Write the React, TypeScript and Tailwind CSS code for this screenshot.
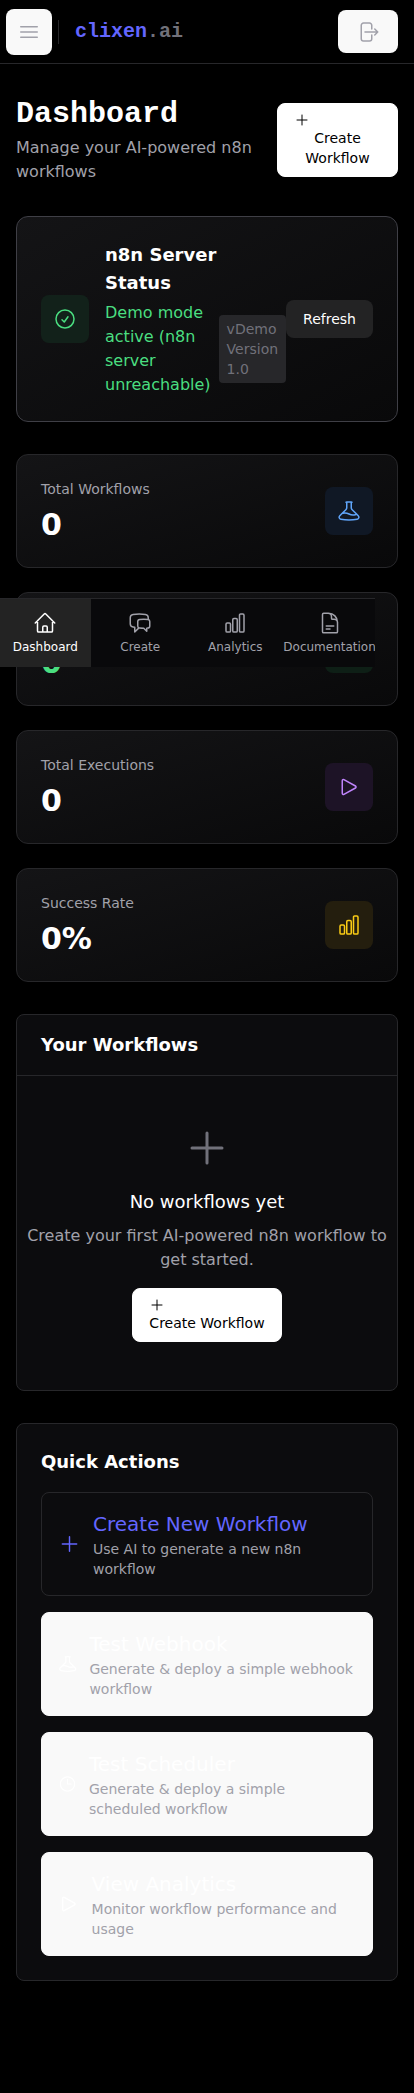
import type { ReactNode } from 'react';
import type { IconType } from 'react-icons';
import {
  HiOutlineArrowRightOnRectangle,
  HiOutlineBars3,
  HiOutlineBeaker,
  HiOutlineChartBar,
  HiOutlineChatBubbleLeftRight,
  HiOutlineCheckCircle,
  HiOutlineClock,
  HiOutlineDocumentText,
  HiOutlineHome,
  HiOutlinePlay,
  HiOutlinePlus,
} from 'react-icons/hi2';

function CreateButton({ className = '' }: { className?: string }) {
  return (
    <button
      className={`shrink-0 rounded-lg border border-white bg-white px-4 py-2 text-center text-sm leading-5 text-black ${className}`}
    >
      <HiOutlinePlus className="h-4 w-4" />
      Create Workflow
    </button>
  );
}

function StatCard({
  label,
  value,
  valueClass,
  iconClass,
  Icon,
}: {
  label: string;
  value: string;
  valueClass: string;
  iconClass: string;
  Icon: IconType;
}) {
  return (
    <div className="flex items-center justify-between rounded-xl border border-[#27272a] bg-linear-to-br from-[#141416] to-[#09090a] p-6">
      <div>
        <p className="text-sm leading-5 text-[#a1a1aa]">{label}</p>
        <p className={`mt-2 text-3xl leading-9 font-bold ${valueClass}`}>{value}</p>
      </div>
      <div className={`flex h-12 w-12 items-center justify-center rounded-lg ${iconClass}`}>
        <Icon className="h-6 w-6" />
      </div>
    </div>
  );
}

function Action({
  Icon,
  iconClass,
  title,
  className,
  children,
}: {
  Icon: IconType;
  iconClass: string;
  title: string;
  className: string;
  children: ReactNode;
}) {
  return (
    <button className={`flex w-full items-center rounded-lg border p-4 text-left ${className}`}>
      <Icon className={`mr-3 h-6 shrink-0 ${iconClass}`} />
      <div>
        <div className="text-xl leading-[30px]">{title}</div>
        <div className="text-sm leading-5 text-[#a1a1aa]">{children}</div>
      </div>
    </button>
  );
}

function NavItem({ Icon, label, className }: { Icon: IconType; label: string; className: string }) {
  return (
    <a className={`flex shrink-0 flex-col items-center py-3 ${className}`}>
      <Icon className="h-6 w-6" />
      <span className="mt-1 text-xs leading-4">{label}</span>
    </a>
  );
}

export default function App() {
  return (
    <div className="relative min-h-[2093px] w-[414px] bg-black font-['DejaVu_Sans',sans-serif] text-base leading-6 text-white">
      <header className="flex h-16 items-center border-b border-[#27272a] pr-4 pl-1.5">
        <button className="flex h-[46px] w-[46px] items-center justify-center rounded-lg bg-[#f9f9f9] text-[#a1a1aa]">
          <HiOutlineBars3 className="h-6 w-6" />
        </button>
        <div className="ml-1.5 h-6 w-px bg-[#27272a]" />
        <div className="ml-4 font-['Liberation_Mono',monospace] text-xl leading-7 font-bold text-[#6366ff]">
          clixen<span className="text-[#71717a]">.ai</span>
        </div>
        <button className="ml-auto flex h-[43px] w-[60px] items-center justify-center rounded-lg bg-[#f9f9f9] text-[#a1a1aa]">
          <HiOutlineArrowRightOnRectangle className="h-6 w-6" />
        </button>
      </header>

      <main className="flex flex-col gap-8 px-4 pt-8">
        <div className="flex items-center justify-between">
          <div>
            <h1 className="font-['Liberation_Mono',monospace] text-3xl leading-9 font-bold">Dashboard</h1>
            <p className="mt-1 text-[#a1a1aa]">Manage your AI-powered n8n workflows</p>
          </div>
          <CreateButton className="w-[121px]" />
        </div>

        <section className="flex items-center rounded-xl border border-[#3f3f46] bg-linear-to-br from-[#141416] to-[#09090a] p-6">
          <div className="flex h-12 w-12 shrink-0 items-center justify-center rounded-lg bg-[#12211a] text-[#4ade80]">
            <HiOutlineCheckCircle className="h-6 w-6" />
          </div>
          <div className="ml-4 w-[181px] shrink-0">
            <h3 className="w-[120px] text-lg leading-7 font-bold">n8n Server Status</h3>
            <div className="mt-1 flex items-center">
              <p className="w-[105.6px] shrink-0 text-[#4ade80]">Demo mode active (n8n server unreachable)</p>
              <span className="ml-2 w-[67.4px] shrink-0 rounded bg-[#27272a] px-2 py-1 text-sm leading-5 text-[#71717a]">
                vDemo Version 1.0
              </span>
            </div>
          </div>
          <button className="h-[38px] w-[87px] shrink-0 rounded-lg bg-[#232324] text-sm leading-5 text-white">
            Refresh
          </button>
        </section>

        <section className="flex flex-col gap-6">
          <StatCard
            label="Total Workflows"
            value="0"
            valueClass="text-white"
            iconClass="bg-[#101825] text-[#60a5fa]"
            Icon={HiOutlineBeaker}
          />
          <StatCard
            label="Active Workflows"
            value="0"
            valueClass="text-[#4ade80]"
            iconClass="bg-[#0e1f16] text-[#4ade80]"
            Icon={HiOutlineCheckCircle}
          />
          <StatCard
            label="Total Executions"
            value="0"
            valueClass="text-white"
            iconClass="bg-[#1d1326] text-[#c084fc]"
            Icon={HiOutlinePlay}
          />
          <StatCard
            label="Success Rate"
            value="0%"
            valueClass="text-white"
            iconClass="bg-[#241e0e] text-[#facc15]"
            Icon={HiOutlineChartBar}
          />
        </section>

        <section className="rounded-lg border border-[#27272a] bg-[#0c0c0e]">
          <div className="border-b border-[#27272a] px-6 py-4">
            <h2 className="text-lg leading-7 font-bold">Your Workflows</h2>
          </div>
          <div className="flex flex-col items-center py-12 text-center">
            <HiOutlinePlus className="h-12 w-12 text-[#71717a]" />
            <h3 className="mt-4 text-lg leading-7">No workflows yet</h3>
            <p className="mt-2 mb-4 text-[#a1a1aa]">Create your first AI-powered n8n workflow to get started.</p>
            <CreateButton />
          </div>
        </section>

        <section className="rounded-lg border border-[#27272a] bg-[#0c0c0e] p-6">
          <h2 className="text-lg leading-7 font-bold">Quick Actions</h2>
          <div className="mt-4 flex flex-col gap-4">
            <Action
              Icon={HiOutlinePlus}
              iconClass="w-[23px]"
              title="Create New Workflow"
              className="border-[#27272a] text-[#6366ff]"
            >
              Use AI to generate a new n8n workflow
            </Action>
            <Action
              Icon={HiOutlineBeaker}
              iconClass="w-[19.4px]"
              title="Test Webhook"
              className="border-[#f9f9f9] bg-[#f9f9f9] text-white"
            >
              Generate &amp; deploy a simple webhook workflow
            </Action>
            <Action
              Icon={HiOutlineClock}
              iconClass="w-[19px]"
              title="Test Scheduler"
              className="border-[#f9f9f9] bg-[#f9f9f9] text-white"
            >
              Generate &amp; deploy a simple scheduled workflow
            </Action>
            <Action
              Icon={HiOutlinePlay}
              iconClass="w-[21.6px]"
              title="View Analytics"
              className="border-[#f9f9f9] bg-[#f9f9f9] text-white"
            >
              Monitor workflow performance and usage
            </Action>
          </div>
        </section>
      </main>

      <nav className="absolute top-[598px] left-0 flex h-[69px] w-[375px] overflow-hidden border-t border-[#27272a] bg-[#09090b] text-[#a1a1aa]">
        <NavItem Icon={HiOutlineHome} label="Dashboard" className="w-[90.6px] bg-[#232323] text-white" />
        <NavItem Icon={HiOutlineChatBubbleLeftRight} label="Create" className="w-[99.2px]" />
        <NavItem Icon={HiOutlineChartBar} label="Analytics" className="w-[91px]" />
        <NavItem Icon={HiOutlineDocumentText} label="Documentation" className="w-[97.6px]" />
      </nav>
    </div>
  );
}
